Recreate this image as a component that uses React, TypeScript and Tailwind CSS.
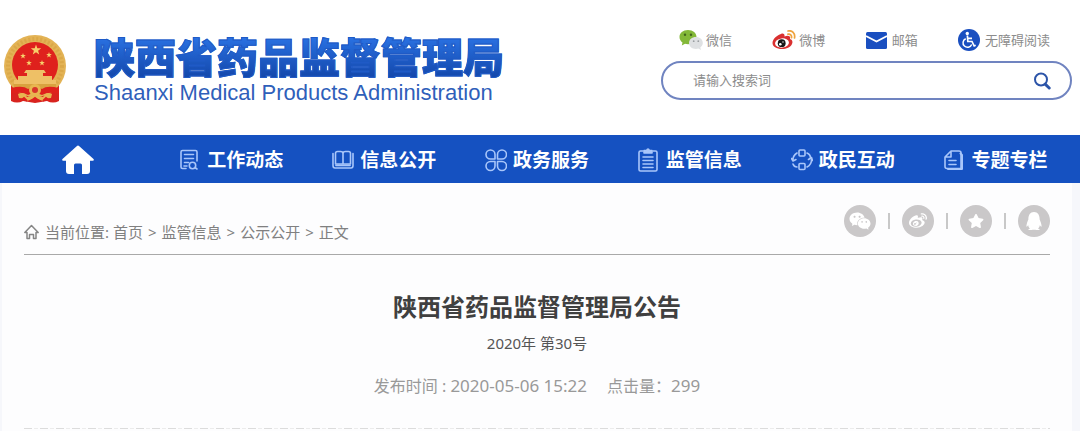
import type { ReactNode } from 'react';
import { AiFillWechat } from 'react-icons/ai';
import { FaStar, FaQq, FaWeibo } from 'react-icons/fa';

function Star({ cx, cy, r }: { cx: number; cy: number; r: number }) {
  const points = Array.from({ length: 10 }, (_, i) => {
    const radius = i % 2 === 0 ? r : r * 0.4;
    const angle = -Math.PI / 2 + (i * Math.PI) / 5;
    return `${cx + radius * Math.cos(angle)},${cy + radius * Math.sin(angle)}`;
  }).join(' ');
  return <polygon points={points} fill="#f7cf6a" />;
}

function Emblem() {
  return (
    <svg viewBox="0 0 64 70" className="h-[70px] w-16 shrink-0" aria-hidden="true">
      <path d="M8 46 L8 66 Q14 69 20 66 L32 68 L44 66 Q50 69 56 66 L56 46Z" fill="#d8231f" />
      <circle cx="32" cy="31" r="31" fill="#e3b355" />
      <circle cx="32" cy="31" r="27" fill="none" stroke="#c98f2c" strokeWidth="4" strokeDasharray="2 2" opacity=".3" />
      <circle cx="32" cy="30" r="23" fill="#df211d" />
      <Star cx={33} cy={15} r={5.5} />
      <Star cx={20} cy={21} r={3} />
      <Star cx={46} cy={20} r={3} />
      <Star cx={26} cy={28} r={3} />
      <Star cx={39} cy={28} r={3} />
      <path d="M23 35h18l2 3h-3v3h9v4h4v5H11v-5h4v-4h9v-3h-3z" fill="#eec066" />
      <path d="M11 49h42v3q-21 7-42 0z" fill="#d9a23f" />
      <path d="M8 53q12-3 17 1l7-3 7 3q5-4 17-1v6q-10-3-17 1l-7-3-7 3q-6-4-17-1z" fill="#df211d" />
      <circle cx="32" cy="55" r="6" fill="#e8b650" />
      <circle cx="32" cy="55" r="3" fill="#d8352a" />
      <path d="M15 59q6-3 9 3l8-2 8 2q4-6 9-3l-1 4q-5 0-8 3l-8-3-8 3q-3-3-8-3z" fill="#e8b650" />
      <path d="M17 66l4-3 3 3M47 66l-4-3-3 3M28 66l4-3 4 3" fill="none" stroke="#df211d" strokeWidth="2" />
    </svg>
  );
}

function WechatIcon() {
  return (
    <svg viewBox="0 0 24 22" className="h-[22px] w-6" aria-hidden="true">
      <path d="M9 1C4 1 .5 4 .5 8c0 2.300 1.200 4.200 3 5.500L2.800 16.500 6 14.800c1 .3 2 .4 3 .4 5 0 8.500-3.200 8.500-7.200S14 1 9 1Z" fill="#83b838" />
      <circle cx="6" cy="5.700" r="1.200" fill="#42651d" />
      <circle cx="12" cy="5.700" r="1.200" fill="#42651d" />
      <path d="M17 8c-4.200 0-7 2.600-7 6s2.800 5.900 7 5.900c.8 0 1.600-.1 2.400-.4l2.600 1.500-.7-2.500c1.500-1.100 2.500-2.700 2.500-4.500C23.800 10.600 21 8 17 8Z" fill="#dfe1e3" />
      <circle cx="14.700" cy="12.200" r=".9" fill="#9a9ea1" />
      <circle cx="19.300" cy="12.200" r=".9" fill="#9a9ea1" />
    </svg>
  );
}

function WeiboIcon() {
  return (
    <svg viewBox="0 0 24 20" className="h-5 w-6" aria-hidden="true">
      <path d="M9 4C11 3 13 4 12.500 6.500 16 5 19 6 18 9c2.500.8 3 3 2 5-1.500 3.200-5.500 5-10 5C4.500 19 .5 16.500.5 13 .5 9 5.500 4.800 9 4Z" fill="#d93030" />
      <ellipse cx="10" cy="13" rx="7" ry="4.600" fill="#fff" transform="rotate(-7 10 13)" />
      <circle cx="9.700" cy="13.200" r="3.900" fill="#171717" />
      <circle cx="8.300" cy="14.200" r="1.300" fill="#fff" />
      <circle cx="11" cy="12" r=".7" fill="#fff" />
      <path d="M16 1c4-1 7.500 2.500 6.500 7M16 4.200c2.200-.5 4 1.200 3.500 3.500" fill="none" stroke="#efa33d" strokeWidth="1.700" strokeLinecap="round" />
    </svg>
  );
}

function MailIcon() {
  return (
    <svg viewBox="0 0 21 17" className="h-[17px] w-[21px]" aria-hidden="true">
      <rect width="21" height="17" rx="1.500" fill="#1a4fc0" />
      <path d="M0 4l10.500 5.500L21 4" fill="none" stroke="#fff" strokeWidth="1.800" />
    </svg>
  );
}

function AccessIcon() {
  return (
    <svg viewBox="0 0 22 22" className="size-[22px]" aria-hidden="true">
      <circle cx="11" cy="11" r="11" fill="#1a4fc0" />
      <circle cx="9.300" cy="4.500" r="1.700" fill="#fff" />
      <path d="M9.400 6.500l.4 6h4.200l2.200 4.500 1.500-.7M10 9.300h4" fill="none" stroke="#fff" strokeWidth="1.700" />
      <path d="M7.700 9.700a4.500 4.500 0 1 0 6 5.800" fill="none" stroke="#fff" strokeWidth="1.500" />
    </svg>
  );
}

function NavSvg({ children }: { children: ReactNode }) {
  return (
    <svg
      viewBox="0 0 22 24"
      className="h-6 w-[22px] shrink-0"
      fill="none"
      stroke="#a9c6fa"
      strokeWidth="1.600"
      strokeLinecap="round"
      strokeLinejoin="round"
      aria-hidden="true"
    >
      {children}
    </svg>
  );
}

const navItems = [
  {
    label: '工作动态',
    icon: (
      <NavSvg>
        <path d="M7 20.500H3.500Q2 20.500 2 19V4q0-1.500 1.500-1.500h13Q18 2.500 18 4v9M5.500 6.500h9M5.500 10.500h9M5.500 14.500h4M5 18h3" />
        <circle cx="13.500" cy="17.500" r="3.200" />
        <path d="M16.500 20l1.500 1" />
      </NavSvg>
    ),
  },
  {
    label: '信息公开',
    icon: (
      <NavSvg>
        <path d="M3.500 16V5.500q0-2 2-2h3Q11 3.500 11 5.500q0-2 2.500-2h3q2 0 2 2V16zM11 5.500v10M1 5.500v12Q1 20 3 20h16q2 0 2-2.500v-12" />
        <path d="M4 17.300h14" strokeWidth="1.800" />
      </NavSvg>
    ),
  },
  {
    label: '政务服务',
    icon: (
      <NavSvg>
        <path d="M10 11H5.500A4.500 4.500 0 1 1 10 6.500zM12.500 11H17a4.500 4.500 0 1 0-4.500-4.500zM10 13.500H5.500A4.500 4.500 0 1 0 10 18zM12.500 13.500H17a4.500 4.500 0 1 1-4.500 4.500z" />
      </NavSvg>
    ),
  },
  {
    label: '监管信息',
    icon: (
      <NavSvg>
        <path d="M5 3H2.500Q1 3 1 4.500v17Q1 23 2.500 23h15q1.500 0 1.500-1.500v-17Q19 3 17.500 3H15M5 9h10M5 12.500h10M5 16h10M5 19.500h10" />
        <path d="M6 5V2.500h2.500q1.500-3 3 0H14V5z" fill="#a9c6fa" />
      </NavSvg>
    ),
  },
  {
    label: '政民互动',
    icon: (
      <NavSvg>
        <rect x="8" y="2" width="6" height="6" rx="1" />
        <rect x="8" y="15.500" width="6" height="6" rx="1" />
        <path d="M6 5Q1.500 8 2 12.500M.5 10.500L2 13l3-1.500M2 16q1 3 4 3M16 5q3.500 1.500 3.500 5M16 19q5-2.500 4.500-9M17.500 11.500l3-2 1 3" />
      </NavSvg>
    ),
  },
  {
    label: '专题专栏',
    icon: (
      <NavSvg>
        <path d="M7 3h8q2 0 2 2v15.500H3q-2 0-2-2V9zM7 3v6H1M5 12.500h7M5 16.500h7" />
        <path d="M16.500 5.500l1.500 1.500v14H4" strokeWidth="2" />
      </NavSvg>
    ),
  },
];

const topLinks = [
  { label: '微信', icon: <WechatIcon />, gap: 'gap-[3px]' },
  { label: '微博', icon: <WeiboIcon />, gap: 'gap-[3px]' },
  { label: '邮箱', icon: <MailIcon />, gap: 'gap-[5px]' },
  { label: '无障碍阅读', icon: <AccessIcon />, gap: 'gap-[5px]' },
];

const shares = [
  { label: '微信', icon: <AiFillWechat className="size-6" /> },
  { label: '微博', icon: <FaWeibo className="size-[18px]" /> },
  { label: '收藏', icon: <FaStar className="size-4" /> },
  { label: 'QQ', icon: <FaQq className="size-[18px]" /> },
];

export default function App() {
  return (
    <div className="bg-[#f6f7fb] font-['Noto_Sans','Noto_Sans_CJK_SC',sans-serif]">
      <header className="flex h-[135px] items-start justify-between bg-white pr-2 pl-[3px]">
        <a href="#home" className="flex items-start gap-[27px] pt-[35px]">
          <Emblem />
          <span className="flex flex-col whitespace-nowrap">
            <span className="bg-linear-to-b from-[#2b74e6] to-[#1244a6] bg-clip-text pb-[5px] font-['Noto_Sans_CJK_SC',sans-serif] text-[41px] leading-[41px] font-black text-transparent [-webkit-text-stroke:1px_#1f5ac6]">
              陕西省药品监督管理局
            </span>
            <span className="font-['Liberation_Sans',sans-serif] text-[22px] leading-6 text-[#2f5fba]">
              Shaanxi Medical Products Administration
            </span>
          </span>
        </a>
        <div className="mt-7 w-[411px]">
          <div className="flex h-6 items-center justify-between pr-[22px] pl-[18px]">
            {topLinks.map((link) => (
              <a
                key={link.label}
                href="#link"
                className={`flex items-center text-[13px] whitespace-nowrap text-[#8c8c8c] ${link.gap}`}
              >
                {link.icon}
                <span className="leading-6">{link.label}</span>
              </a>
            ))}
          </div>
          <form className="mt-[9px] flex h-[39px] items-center rounded-full border-2 border-[#7084c0] bg-white pr-4 pl-[30px]">
            <input
              type="text"
              aria-label="搜索"
              placeholder="请输入搜索词"
              className="min-w-0 flex-1 bg-transparent text-[13px] outline-none placeholder:text-[#8c8c8c]"
            />
            <button type="button" aria-label="搜索" className="flex size-6 items-center justify-center">
              <svg viewBox="0 0 18 18" className="size-[18px]" fill="none" stroke="#2c54a8" aria-hidden="true">
                <circle cx="8" cy="7.500" r="6" strokeWidth="2" />
                <path d="M12.200 12.200l4 3.800" strokeWidth="3" strokeLinecap="round" />
              </svg>
            </button>
          </form>
        </div>
      </header>

      <nav className="grid h-12 grid-cols-7 bg-[#1551c1] pt-[2px] pr-2 pl-[2px]">
        <a href="#home" aria-label="首页" className="flex items-center justify-center">
          <svg viewBox="0 0 32 30" className="h-[30px] w-8" fill="#fff" aria-hidden="true">
            <path d="M14.700 1.200q1.300-1.300 2.600 0L31.500 14q1 1.500-.8 1.700H28V26q0 3-3 3h-5v-9q0-1.500-1.500-1.500h-5Q12 18.500 12 20v9H7q-3 0-3-3V15.700H1.300Q-.5 15.500.5 14z" />
          </svg>
        </a>
        {navItems.map((item) => (
          <a
            key={item.label}
            href="#section"
            className="flex items-center justify-center gap-[6px] text-[19px] font-bold whitespace-nowrap text-white"
          >
            {item.icon}
            <span className="leading-6">{item.label}</span>
          </a>
        ))}
      </nav>

      <main className="mr-2 ml-[2px] bg-[#fdfdfe] px-[22px]">
        <div className="flex h-[72px] items-start justify-between border-b border-[#a9a9a9]">
          <div className="flex items-center gap-[5px] pt-[37px] text-[15px] leading-6 whitespace-nowrap text-[#808080]">
            <svg viewBox="0 0 16 16" className="size-4" fill="none" stroke="#858585" strokeWidth="1.500" strokeLinejoin="round" aria-hidden="true">
              <path d="M.8 8.500L7.500 1.500l6.700 7H12v6H9.500v-4h-4v4H3v-6z" />
            </svg>
            <span>
              当前位置: <a href="#home">首页</a>
            </span>
            <span>&gt;</span>
            <a href="#supervision">监管信息</a>
            <span>&gt;</span>
            <a href="#public">公示公开</a>
            <span>&gt;</span>
            <span>正文</span>
          </div>
          <div className="flex items-center gap-3 pt-[22px]">
            {shares.map((share, index) => (
              <div key={share.label} className="flex items-center gap-3">
                {index > 0 && <span className="h-4 w-[2px] bg-[#c8c8c8]" />}
                <button
                  type="button"
                  aria-label={share.label}
                  className="flex size-8 items-center justify-center rounded-full bg-[#cac8c9] text-white"
                >
                  {share.icon}
                </button>
              </div>
            ))}
          </div>
        </div>

        <article className="text-center">
          <h1 className="pt-[34px] text-[24px] leading-9 font-bold text-[#404040]">陕西省药品监督管理局公告</h1>
          <p className="pt-[6px] text-[15px] leading-6 text-[#555]">2020年 第30号</p>
          <p className="flex justify-center gap-5 pt-[19px] text-[16px] leading-6 text-[#999]">
            <span>
              发布时间 : <span className="text-[17px]">2020-05-06 15:22</span>
            </span>
            <span>
              点击量：<span className="text-[17px]">299</span>
            </span>
          </p>
          <div className="mt-[30px] h-px bg-[repeating-linear-gradient(to_right,#dcdcdc_0_8px,transparent_8px_10px,#ececec_10px_14px,transparent_14px_16px)]" />
          <div className="h-[2px]" />
        </article>
      </main>
    </div>
  );
}
